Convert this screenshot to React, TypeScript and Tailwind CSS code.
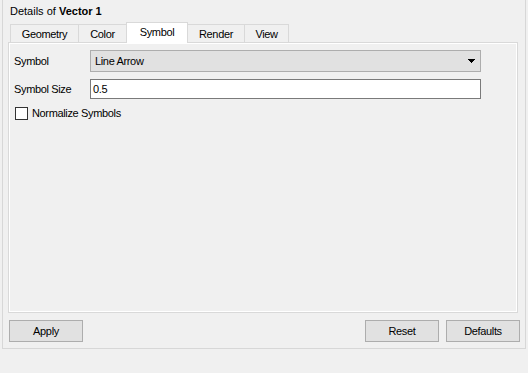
import { useState } from 'react'

const tabs = [
  { name: 'Geometry', w: 'w-[69px]' },
  { name: 'Color', w: 'w-[49px]' },
  { name: 'Symbol', w: 'w-[62px]' },
  { name: 'Render', w: 'w-[58px]' },
  { name: 'View', w: 'w-[45px]' },
]

function ComboArrow() {
  return (
    <svg width="7" height="4" viewBox="0 0 7 4" className="block">
      <path d="M0 0h7v1H0zM1 1h5v1H1zM2 2h3v1H2zM3 3h1v1H3z" fill="#000" />
    </svg>
  )
}

export default function App() {
  const [active, setActive] = useState('Symbol')
  const [normalize, setNormalize] = useState(false)

  return (
    <div className="w-[528px] h-[373px] bg-[#f0f0f0] text-[11px] leading-[13px] text-black font-['Liberation_Sans',Arial,sans-serif] tracking-[-0.35px] overflow-hidden">
      <div className="ml-[2px] w-[524px] h-[349px] border-x border-b border-[#d7d7d7] flex flex-col">
        {/* Title */}
        <div className="h-[22px] pl-[7px] pt-[5px] tracking-normal">
          Details of <span className="font-bold">Vector 1</span>
        </div>

        {/* Tab strip */}
        <div className="h-[20px] ml-[7px] flex items-end relative z-10">
          {tabs.map((t, i) => {
            const sel = t.name === active
            return (
              <button
                key={t.name}
                onClick={() => setActive(t.name)}
                className={`${t.w} ${i > 0 ? '-ml-px' : ''} flex items-center justify-center border-x border-t border-[#d9d9d9] ${
                  sel ? 'h-[21px] -mb-px bg-white relative z-10 pb-[1px]' : 'h-[18px] bg-[#f0f0f0] pt-[2px]'
                }`}
              >
                {t.name}
              </button>
            )
          })}
        </div>

        {/* Tab pane */}
        <div className="ml-[5px] w-[510px] h-[271px] border border-[#d9d9d9] shadow-[inset_0_0_0_1px_#fff] pt-[7px] pl-[5px] flex flex-col">
          <div className="flex items-center h-[22px]">
            <span className="w-[76px]">Symbol</span>
            <div className="w-[391px] h-[22px] bg-[#e1e1e1] border border-[#adadad] flex items-center justify-between pl-[4px] pr-[5px]">
              <span>Line Arrow</span>
              <ComboArrow />
            </div>
          </div>
          <div className="flex items-center h-[20px] mt-[7px]">
            <span className="w-[76px]">Symbol Size</span>
            <div className="w-[391px] h-[20px] bg-white border border-[#7a7a7a] flex items-center pl-[2px]">
              0.5
            </div>
          </div>
          <label className="flex items-center h-[13px] mt-[8px] pl-[1px] gap-[4px] cursor-default">
            <span
              onClick={() => setNormalize(!normalize)}
              className="w-[13px] h-[13px] border border-[#333] bg-white flex items-center justify-center"
            >
              {normalize && (
                <svg width="9" height="9" viewBox="0 0 9 9">
                  <path d="M1 4.5l2.5 2.5L8 1.5" stroke="#000" strokeWidth="1.5" fill="none" />
                </svg>
              )}
            </span>
            <span>Normalize Symbols</span>
          </label>
        </div>

        {/* Buttons */}
        <div className="mt-[7px] h-[22px] flex items-center pl-[6px] pr-[5px]">
          <button className="w-[74px] h-[22px] bg-[#e1e1e1] border border-[#adadad]">Apply</button>
          <div className="flex-1" />
          <button className="w-[74px] h-[22px] bg-[#e1e1e1] border border-[#adadad]">Reset</button>
          <button className="w-[74px] h-[22px] bg-[#e1e1e1] border border-[#adadad] ml-[7px]">Defaults</button>
        </div>
      </div>
    </div>
  )
}
